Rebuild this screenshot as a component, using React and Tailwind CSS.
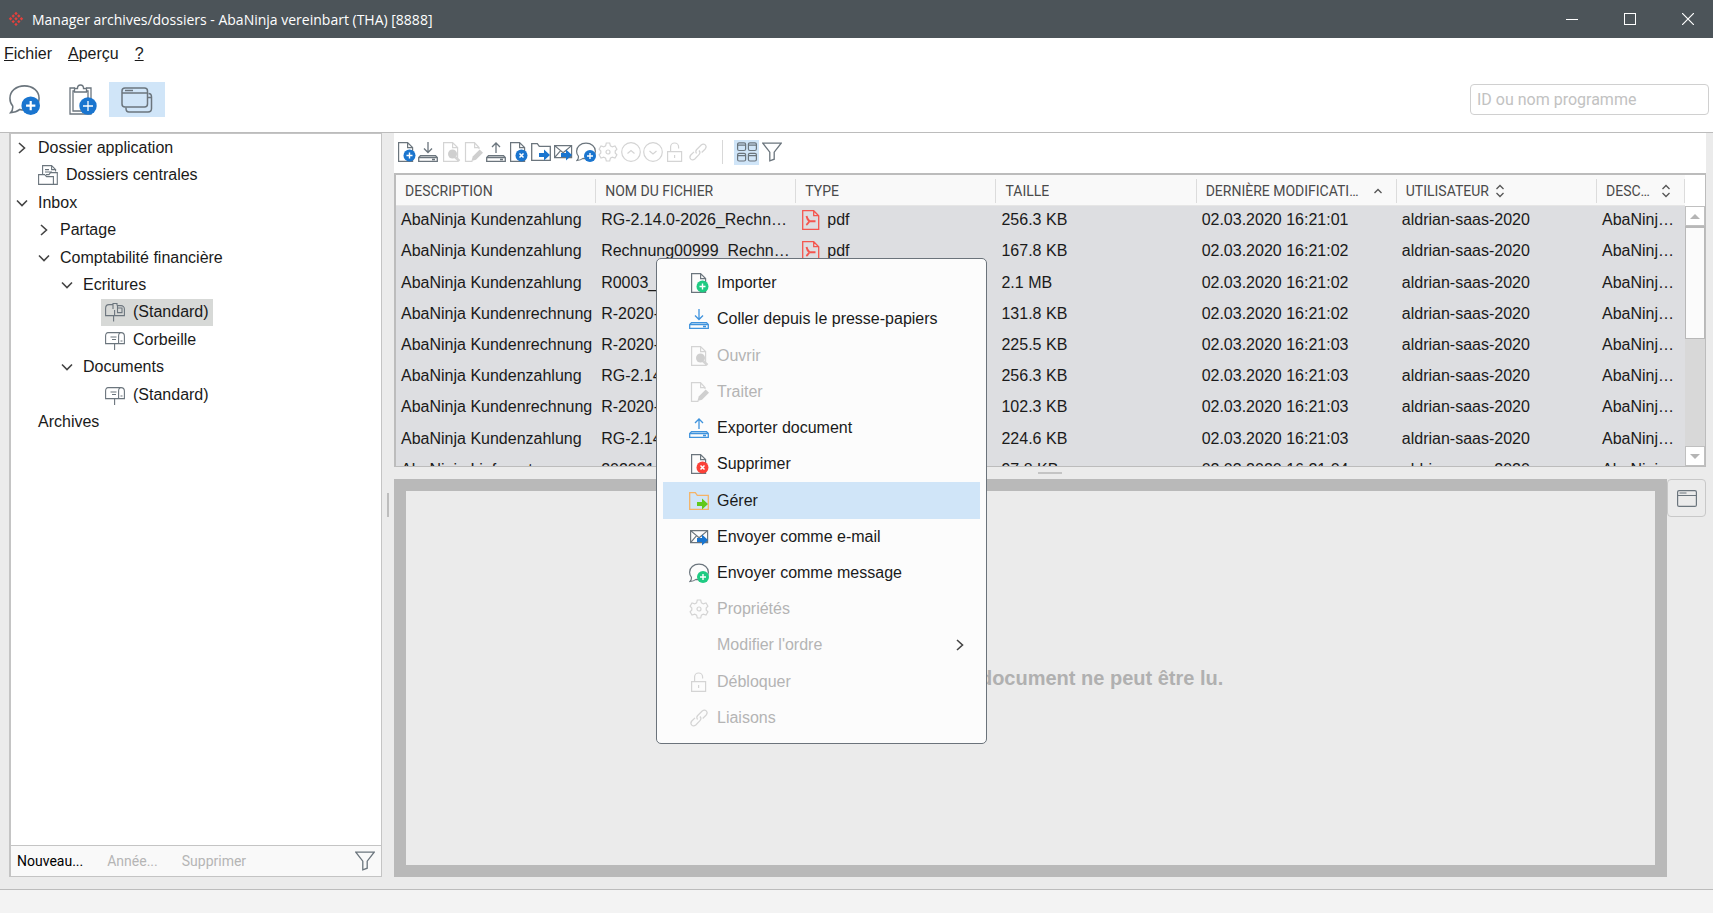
const S = '#6b757d'
const BLUE = '#1a75cf'
const OFF = '#d4d4d4'

const Svg = ({ size = 20, children, color = S, w = 1.2 }) => (
  <svg width={size} height={size} viewBox="0 0 20 20" fill="none" stroke={color} strokeWidth={w} className="shrink-0">
    {children}
  </svg>
)

const Badge = ({ color, cross, x = 13.5, y = 13.5, r = 6 }) => (
  <g stroke="none">
    <circle cx={x} cy={y} r={r} fill={color} />
    {cross
      ? <path d={`M${x - 2} ${y - 2}l4 4m0-4l-4 4`} stroke="#fff" strokeWidth="1.5" />
      : <path d={`M${x - 3} ${y}h6m-3-3v6`} stroke="#fff" strokeWidth="1.4" />}
  </g>
)

const DocPath = () => <path d="M2.6 .6h9l5 5v13.8h-14zM11.6 .6v5h5" />

const DocAdd = ({ badge = BLUE }) => <Svg><DocPath /><Badge color={badge} /></Svg>
const DocDelete = ({ badge = BLUE }) => <Svg><DocPath /><Badge color={badge} cross /></Svg>

const DocView = () => (
  <Svg color={OFF}>
    <DocPath />
    <circle cx="11.5" cy="12" r="4.5" fill="#cfcfcf" stroke="none" />
    <path d="M14 15l4.5 4" strokeWidth="2.5" />
  </Svg>
)

const DocEdit = () => (
  <Svg color={OFF}>
    <path d="M16 7V5.6l-4.500-5h-9v18.800h7M11.600 .6v5h5" />
    <path d="M8.500 19l1.200-4.500 7-7 3.300 3.300-7 7z" fill="#cfcfcf" stroke="none" />
  </Svg>
)

const Tray = ({ up, color = S }) => (
  <Svg color={color} w={1.3}>
    <path d={up ? 'M10 11V1M6 5l4-4 4 4' : 'M10 0v10.5M6 6.500l4 4 4-4'} />
    <path d="M2.500 13.600h15l1.800 1.800v3.900H.7v-3.900zM.7 15.500h18.600M14 17.500h3" />
  </Svg>
)

const FolderMove = ({ color = S, arrow = BLUE }) => (
  <Svg color={color} w={1.3}>
    <path d="M.7 18.300V1.700h5.600l2 2.600h11v14z" />
    <path d="M8 11h5V7.500l6 5.500-6 5.500V15H8z" fill={arrow} stroke="none" />
  </Svg>
)

const MailSend = () => (
  <Svg>
    <path d="M1.600 3.600h17v12h-17zM1.600 3.600l8.500 7 8.500-7M1.600 15.600l6-7M18.600 15.600l-6-7" />
    <path d="M8 11h5V7.500l6 5.500-6 5.500V15H8z" fill={BLUE} stroke="none" />
  </Svg>
)

const Chat = ({ badge = BLUE, size }) => (
  <Svg size={size} w={size ? 1 : 1.200}>
    <path d="M1 18.500c1-1 1.600-2.500 1.400-4.300C1.200 12.900 .6 11 .6 9.200c0-4.500 4-8 9.400-8s9.400 3.500 9.400 8-4 7.600-9.400 7.600c-1 0-2-.1-3-.4-1.500 1.200-3.600 2-6 2.100z" />
    <Badge color={badge} x={14} y={14} />
  </Svg>
)

const Gear = () => (
  <Svg color={OFF}>
    <path d="M8.300 1h3.400l.7 2.800 1.900 1.100 2.700-.9 1.900 3.100-1.700 1.900v2l1.700 1.900-1.900 3.100-2.700-.9-1.900 1.100-.7 2.800H8.300l-.7-2.800-1.900-1.100-2.700 .9-1.900-3.100L2.800 11V9L1.100 7.100 3 4l2.700 .9 1.900-1.100z" />
    <circle cx="10" cy="10" r="2" />
  </Svg>
)

const CircleArrow = ({ up }) => (
  <Svg color={OFF}>
    <circle cx="10" cy="10" r="9.300" />
    <path d={up ? 'M6.500 11.500l3.500-3 3.500 3' : 'M6.500 9l3.500 3L13.500 9'} />
  </Svg>
)

const Lock = () => (
  <Svg color={OFF}>
    <path d="M2.600 9.600h14v9.800h-14zM5.600 9.600V5a4 4 0 0 1 8 0v1.500M9.600 13v3" />
  </Svg>
)

const Link = () => (
  <Svg color={OFF}>
    <path d="M8.500 11.500c-1-1.500-.8-3 .2-4l4.500-4.500c3-2.500 6.500 1 4 4l-3.500 3.500M11 8.500c1.200 1.400 1 3.200 0 4.200L6.800 17c-3 2.500-6.500-1-4-4L6 9.800" />
  </Svg>
)

const Funnel = () => (
  <Svg w={1.3}>
    <path d="M.8 1.200h18.400l-7 9v7l-4.400 1.600v-8.600z" />
  </Svg>
)

const Tiles = () => (
  <Svg>
    <rect x=".6" y=".8" width="8" height="7.700" rx="1.500" /><path d="M.6 3.200h8M11.400 3.200h8M.6 13.700h8M11.400 13.700h8" />
    <rect x="11.400" y=".8" width="8" height="7.700" rx="1.500" />
    <rect x=".6" y="11.300" width="8" height="7.700" rx="1.500" />
    <rect x="11.400" y="11.300" width="8" height="7.700" rx="1.500" />
  </Svg>
)

const Pdf = () => (
  <Svg color="#f4564f" w={1.300}>
    <path d="M1.700 .7h11l5 5v13.600h-16zM12.700 .7v5h5" />
    <path d="M5.500 6c.5 2.500 1.500 4 3 5.300M8.500 11.300c-1 1.400-2 2.800-3.200 3.700M8.500 11.300h6" strokeWidth="1.900" />
  </Svg>
)

const Mailbox = ({ full }) => (
  <Svg w={1.1}>
    {full
      ? <path d="M7.500 2.600H4C2 2.600.6 4 .6 6.500v7.100h9V8M9.600 13.600h9.800V7c0-2-1.500-3.400-3.400-3.400h-3.500M8 7V1.500h4v2M12.500 3.600v7h4.500V6h-4M8.600 13.600v6" />
      : <path d="M3 2.600h13c2 0 3.400 1.500 3.400 3.500v7.500H.6V6c0-2 1-3.400 2.400-3.400zM13.600 13.600V6c0-2 1-3.400 2.400-3.400M5.500 7h6M7 9.500h4M15.500 11h2M9.600 13.600v6.400" />}
  </Svg>
)

const CentralFolder = () => (
  <Svg w={1.1}>
    <path d="M4.600 9V.6h9l3.800 3.800M13.600 .6v4h4v2M7 4.600h4M7 7h7M.6 19.400V9.600h6l2 2h6.800v7.800zM8 9.600h3l1.500-2h6.800v11.800h-4" />
  </Svg>
)

const Chevron = ({ down }) => (
  <svg width="12" height="12" viewBox="0 0 12 12" fill="none" stroke="#444" strokeWidth="1.6" className="shrink-0">
    <path d={down ? 'M1 3.500l5 5 5-5' : 'M3 1l5.500 5L3 11'} />
  </svg>
)

const Sort = ({ both }) => (
  <svg width="10" height="14" viewBox="0 0 10 14" fill="none" stroke="#555" strokeWidth="1.3" className="shrink-0">
    <path d={both ? 'M1.500 5L5 1.500 8.500 5M1.500 9L5 12.500 8.500 9' : 'M1.500 9L5 5.500 8.500 9'} />
  </svg>
)

const Clipboard = () => (
  <svg width="30" height="32" viewBox="0 0 30 32" fill="none" stroke={S} strokeWidth="1.3">
    <path d="M7 4H2v26h21V4h-5M7 7H5v20h15V7h-2" />
    <path d="M6.500 8V4.500h3C9.500-.2 15.500-.2 15.500 4.500h3V8z" fill="#fff" />
    <circle cx="20" cy="22" r="8.700" fill={BLUE} stroke="none" />
    <path d="M15 22h10m-5-5v10" stroke="#fff" />
  </svg>
)

const Windows = () => (
  <svg width="32" height="28" viewBox="0 0 32 28" fill="none" stroke={S} strokeWidth="1.5">
    <rect x="1" y="2" width="25.500" height="19" rx="3" />
    <path d="M1 7h25.500M4 4.500h8M5 21.500v1c0 2 1 3.500 3 3.500h19c2 0 3.500-1.500 3.500-3.500V11c0-2-1-3.500-3-3.500M27 11.500h3.500" />
  </svg>
)

const Logo = () => (
  <svg width="16" height="16" viewBox="0 0 16 16" fill="#e5403c">
    {[[8, 2.5], [5.200, 5], [10.800, 5], [2.500, 7.800], [8, 7.800], [13.500, 7.800], [5.200, 10.600], [10.800, 10.600], [8, 13.400]].map(([x, y]) => (
      <path key={`${x}-${y}`} d={`M${x} ${y - 1.7}l1.700 1.700-1.700 1.700-1.700-1.700z`} />
    ))}
  </svg>
)

const tree = [
  { label: 'Dossier application', pad: 'pl-[5px]', chevron: 'right' },
  { label: 'Dossiers centrales', pad: 'pl-[27px]', icon: <CentralFolder /> },
  { label: 'Inbox', pad: 'pl-[5px]', chevron: 'down' },
  { label: 'Partage', pad: 'pl-[27px]', chevron: 'right' },
  { label: 'Comptabilité financière', pad: 'pl-[27px]', chevron: 'down' },
  { label: 'Ecritures', pad: 'pl-[50px]', chevron: 'down' },
  { label: '(Standard)', pad: 'pl-[90px]', icon: <Mailbox full />, selected: true },
  { label: 'Corbeille', pad: 'pl-[90px]', icon: <Mailbox /> },
  { label: 'Documents', pad: 'pl-[50px]', chevron: 'down' },
  { label: '(Standard)', pad: 'pl-[90px]', icon: <Mailbox /> },
  { label: 'Archives', pad: 'pl-[27px]' },
]

const actions = [
  ['Importer', <DocAdd />],
  ['Coller', <Tray />],
  ['Ouvrir', <DocView />, true],
  ['Traiter', <DocEdit />, true],
  ['Exporter', <Tray up />],
  ['Supprimer', <DocDelete />],
  ['Gérer', <FolderMove />],
  ['E-mail', <MailSend />],
  ['Message', <Chat />],
  ['Propriétés', <Gear />, true],
  ['Monter', <CircleArrow up />, true],
  ['Descendre', <CircleArrow />, true],
  ['Débloquer', <Lock />, true],
  ['Liaisons', <Link />, true],
]

const columns = [
  { label: 'DESCRIPTION' },
  { label: 'NOM DU FICHIER' },
  { label: 'TYPE' },
  { label: 'TAILLE' },
  { label: 'DERNIÈRE MODIFICATION', sort: 'up' },
  { label: 'UTILISATEUR', sort: 'both' },
  { label: 'DESCRIPTION', sort: 'both' },
]

const rows = [
  ['AbaNinja Kundenzahlung', 'RG-2.14.0-2026_Rechnung', '256.3 KB', '02.03.2020 16:21:01'],
  ['AbaNinja Kundenzahlung', 'Rechnung00999_Rechnung', '167.8 KB', '02.03.2020 16:21:02'],
  ['AbaNinja Kundenzahlung', 'R0003_Rechnung', '2.1 MB', '02.03.2020 16:21:02'],
  ['AbaNinja Kundenrechnung', 'R-2020-001', '131.8 KB', '02.03.2020 16:21:02'],
  ['AbaNinja Kundenrechnung', 'R-2020-002', '225.5 KB', '02.03.2020 16:21:03'],
  ['AbaNinja Kundenzahlung', 'RG-2.14.0-2026', '256.3 KB', '02.03.2020 16:21:03'],
  ['AbaNinja Kundenrechnung', 'R-2020-003', '102.3 KB', '02.03.2020 16:21:03'],
  ['AbaNinja Kundenzahlung', 'RG-2.14.0-2026', '224.6 KB', '02.03.2020 16:21:03'],
  ['AbaNinja Lieferantenrechnung', '202001', '97.8 KB', '02.03.2020 16:21:04'],
]

const menu = [
  ['Importer', <DocAdd badge="#1fcb83" />],
  ['Coller depuis le presse-papiers', <Tray color="#3f93dd" />],
  ['Ouvrir', <DocView />, true],
  ['Traiter', <DocEdit />, true],
  ['Exporter document', <Tray up color="#3f93dd" />],
  ['Supprimer', <DocDelete badge="#fb4138" />],
  ['Gérer', <FolderMove color="#f5b366" arrow="#62c91c" />],
  ['Envoyer comme e-mail', <MailSend />],
  ['Envoyer comme message', <Chat badge="#1fcb83" />],
  ['Propriétés', <Gear />, true],
  ["Modifier l'ordre", null, true],
  ['Débloquer', <Lock />, true],
  ['Liaisons', <Link />, true],
]

const TitleBar = () => (
  <header className="flex h-[38px] shrink-0 items-center bg-[#4c5459] pl-2 text-white">
    <Logo />
    <h1 className="ml-2 flex-1 font-['Open_Sans',sans-serif] text-[14px]">Manager archives/dossiers - AbaNinja vereinbart (THA) [8888]</h1>
    <div className="flex h-full gap-2">
      <button aria-label="Réduire" className="flex w-[50px] items-center justify-center"><span className="h-px w-3 bg-white"></span></button>
      <button aria-label="Agrandir" className="flex w-[50px] items-center justify-center"><span className="size-3 border border-white"></span></button>
      <button aria-label="Fermer" className="flex w-[50px] items-center justify-center">
        <svg width="12" height="12" viewBox="0 0 12 12" stroke="#fff" strokeWidth="1.2"><path d="M0 0l12 12M12 0L0 12" /></svg>
      </button>
    </div>
  </header>
)

const Sidebar = () => (
  <aside className="flex w-[373px] shrink-0 flex-col border border-l-2 border-[#c4c4c4] bg-white">
    <ul className="flex h-[302px] flex-col">
      {tree.map((item, i) => (
        <li key={i} className={`flex flex-1 ${item.pad}`}>
          <button className={`flex h-full items-center pr-1 ${item.selected ? 'bg-[#d7d9d7]' : ''} ${item.pad === 'pl-[90px]' ? 'pl-1' : ''}`}>
            {item.chevron && <span className="mr-[10px] flex"><Chevron down={item.chevron === 'down'} /></span>}
            {item.icon && <span className="mr-2 flex">{item.icon}</span>}
            {item.label}
          </button>
        </li>
      ))}
    </ul>
    <div className="mt-auto flex h-[31px] items-center border-t border-[#c4c4c4] bg-[#f9f9f9] px-[6px] font-[Roboto,sans-serif] text-[14px] text-[#b5b5b5]">
      <button className="mr-6 text-black">Nouveau...</button>
      <button className="mr-6" disabled>Année...</button>
      <button disabled>Supprimer</button>
      <button aria-label="Filtrer" className="ml-auto"><Funnel /></button>
    </div>
  </aside>
)

const FileTable = () => (
  <div className="flex h-[294px] shrink-0 overflow-hidden border border-t-2 border-l-2 border-[#bcbcbc] bg-[#dddee1]">
    <div className="min-w-0 flex-1 overflow-hidden">
      <table className="h-[312px] w-full table-fixed border-collapse text-left">
        <colgroup>
          <col /><col /><col /><col /><col /><col />
          <col className="w-[88px]" />
        </colgroup>
        <thead>
          <tr className="h-[30px] border-b border-[#e6e6e6] bg-[#f9f9f9]">
            {columns.map((c, i) => (
              <th key={i} className="p-0 pt-1 pb-[2px] font-[Roboto,sans-serif] text-[14px] font-normal text-[#4a4a4a]">
                <div className="flex h-6 items-center gap-[6px] border-r border-[#dcdcdc] pr-[13px] pl-[9px]">
                  <span className="truncate">{c.label}</span>
                  {c.sort && <Sort both={c.sort === 'both'} />}
                </div>
              </th>
            ))}
          </tr>
        </thead>
        <tbody>
          {rows.map(([desc, file, size, date], i) => (
            <tr key={i}>
              <td className="truncate pb-[3px] pl-[5px]">{desc}</td>
              <td className="truncate pr-1 pb-[3px] pl-[5px]">{file}</td>
              <td className="pb-[3px] pl-[5px]"><span className="flex items-center gap-[6px]"><Pdf />pdf</span></td>
              <td className="pb-[3px] pl-[5px]">{size}</td>
              <td className="pb-[3px] pl-[5px]">{date}</td>
              <td className="pb-[3px] pl-[5px]">aldrian-saas-2020</td>
              <td className="truncate pr-2 pb-[3px] pl-[5px]">{desc}</td>
            </tr>
          ))}
        </tbody>
      </table>
    </div>
    <div className="flex w-5 shrink-0 flex-col bg-[#d8d8d8]">
      <div className="h-[31px] bg-white"></div>
      <button aria-label="Défiler vers le haut" className="flex h-5 items-center justify-center border border-[#c0c0c0] bg-white">
        <svg width="10" height="5" viewBox="0 0 10 5" fill="#b5b5b5"><path d="M0 5l5-5 5 5z" /></svg>
      </button>
      <div className="h-[113px] border border-t-2 border-[#b8b8b8] bg-[#fbfbfb]"></div>
      <button aria-label="Défiler vers le bas" className="mt-auto flex h-5 items-center justify-center border border-[#c0c0c0] bg-white">
        <svg width="10" height="5" viewBox="0 0 10 5" fill="#b5b5b5"><path d="M0 0l5 5 5-5z" /></svg>
      </button>
    </div>
  </div>
)

const ContextMenu = () => (
  <ul className="absolute top-[258px] left-[656px] flex h-[486px] w-[331px] flex-col rounded-[5px] border border-[#6b737b] bg-[#fcfcfc] px-[6px] pt-[6px] pb-[7px]">
    {menu.map(([label, icon, off]) => (
      <li key={label} className="flex-1">
        <button disabled={off} className={`flex h-full w-full items-center pl-[26px] ${label === 'Gérer' ? 'bg-[#d0e5f8]' : ''} ${off ? 'text-[#b4b4b4]' : ''}`}>
          <span className="mr-2 flex w-5">{icon}</span>
          {label}
          {!icon && <span className="mr-[14px] ml-auto"><Chevron /></span>}
        </button>
      </li>
    ))}
  </ul>
)

const App = () => {
  return (
    <div className="relative flex min-h-screen flex-col bg-[#ebebeb] font-['Liberation_Sans',sans-serif] text-[16px] text-[#1a1a1a]">
      <TitleBar />

      <nav className="flex h-[33px] shrink-0 items-center gap-4 bg-white pb-[2px] pl-1">
        <button><u>F</u>ichier</button>
        <button><u>A</u>perçu</button>
        <button><u>?</u></button>
      </nav>

      <div className="flex h-[62px] shrink-0 items-center border-b border-[#bcbcbc] bg-white pr-1 pb-1 pl-[9px]">
        <button aria-label="Nouveau message" className="mr-[28px]"><Chat size={31} /></button>
        <button aria-label="Nouvelle tâche" className="mr-[11px]"><Clipboard /></button>
        <button aria-label="Fenêtres" className="flex h-[35px] w-[56px] items-center justify-center bg-[#d0e5f8]"><Windows /></button>
        <input aria-label="ID ou nom programme" placeholder="ID ou nom programme" className="ml-auto h-[31px] w-[239px] rounded-[4px] border border-[#d0d0d0] px-[6px] font-[Roboto,sans-serif] text-[16px] placeholder:text-[#c2c2c2]" />
      </div>

      <div className="flex flex-1 pr-[7px] pb-[12px] pl-[9px]">
        <Sidebar />
        <div className="flex w-3 shrink-0 items-center justify-center"><span className="h-6 w-[2px] bg-[#bdbdbd]"></span></div>

        <main className="flex min-w-0 flex-1 flex-col">
          <div className="flex h-[40px] shrink-0 items-center bg-white pb-[2px] pl-[2px]">
            <div className="flex w-[312px] justify-between">
              {actions.map(([label, icon, off]) => (
                <button key={label} aria-label={label} disabled={off}>{icon}</button>
              ))}
            </div>
            <span className="mr-[11px] ml-[14px] h-6 w-px bg-[#d8d8d8]"></span>
            <button aria-label="Mosaïque" className="mr-[3px] flex size-[25px] items-center justify-center bg-[#d0e5f8]"><Tiles /></button>
            <button aria-label="Filtrer"><Funnel /></button>
          </div>
          <FileTable />
          <div className="flex h-3 shrink-0 items-center justify-center"><span className="h-[2px] w-6 bg-[#c4c4c4]"></span></div>
          <div className="flex flex-1 items-start">
            <div className="flex flex-1 items-center justify-center self-stretch border-[12px] border-[#b9b9b9]">
              <p className="text-[20px] font-bold text-[#b0b0b0]">Le contenu du document ne peut être lu.</p>
            </div>
            <button aria-label="Aperçu dans une fenêtre" className="flex h-[38px] w-[39px] items-center justify-center rounded-[4px] border border-[#c8c8c8]">
              <svg width="20" height="17" viewBox="0 0 20 17" fill="none" stroke={S} strokeWidth="1.2">
                <rect x=".6" y=".6" width="18.800" height="15.800" rx="1.500" />
                <path d="M.6 5.500h18.800M2.500 3h7" />
              </svg>
            </button>
          </div>
        </main>
      </div>

      <footer className="h-6 shrink-0 border-t border-[#bcbcbc] bg-[#f3f3f3]"></footer>
      <ContextMenu />
    </div>
  )
}

export default App
